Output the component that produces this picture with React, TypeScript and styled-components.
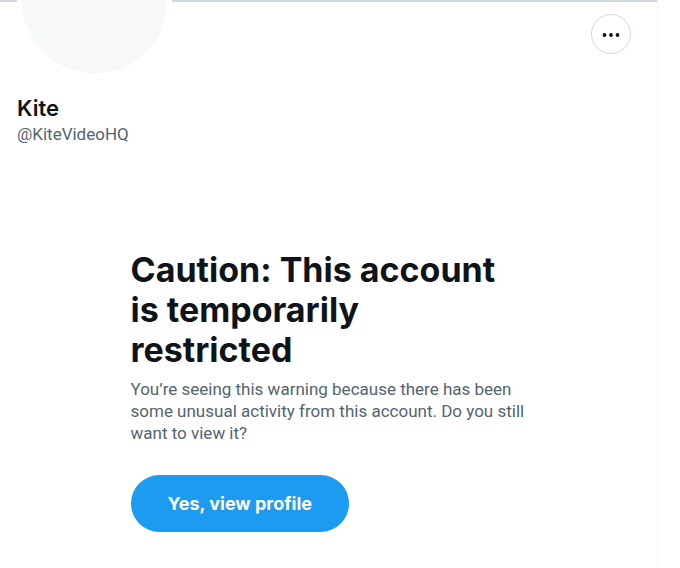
import React from "react";
import styled, { createGlobalStyle } from "styled-components";

const Global = createGlobalStyle`
  *, *::before, *::after { box-sizing: border-box; }
  body { margin: 0; background: #fff; color: #0f1419; font-family: Roboto, "Liberation Sans", sans-serif; }
`;

const Column = styled.main`
  min-height: 100vh;
  margin-right: 22px;
  border-right: 1px solid #eff3f4;
`;

const Banner = styled.div`
  height: 2px;
  background: #cfd9de;
`;

const ProfileTop = styled.div`
  display: flex;
  justify-content: space-between;
  align-items: flex-start;
  padding: 0 26px 0 17px;
`;

const Avatar = styled.div`
  width: 155px;
  height: 155px;
  margin-top: -79px;
  border: 5px solid #fff;
  border-radius: 50%;
  background: #f7f9f9;
`;

const MoreButton = styled.button`
  display: flex;
  align-items: center;
  justify-content: center;
  width: 40px;
  height: 40px;
  margin-top: 12px;
  padding: 0;
  border: 1px solid #cfd9de;
  border-radius: 50%;
  background: #fff;
  color: #0f1419;
`;

const Names = styled.header`
  padding: 16px 17px 0;
`;

const DisplayName = styled.h2`
  margin: 0;
  font-family: Inter, Roboto, sans-serif;
  font-size: 22px;
  line-height: 28px;
  font-weight: 600;
`;

const Handle = styled.p`
  margin: 0;
  color: #536471;
  font-size: 17px;
  line-height: 24px;
`;

const Warning = styled.section`
  width: 396px;
  max-width: 100%;
  margin: 104px auto 0;
`;

const Title = styled.h1`
  margin: 0 0 8px;
  font-family: Inter, Roboto, sans-serif;
  font-size: 34px;
  line-height: 40px;
  font-weight: 700;
`;

const Message = styled.p`
  margin: 0 0 31px;
  color: #536471;
  font-size: 17px;
  line-height: 22px;
`;

const ViewButton = styled.button`
  height: 57px;
  padding: 0 37px;
  border: 0;
  border-radius: 29px;
  background: #1d9bf0;
  color: #fff;
  font-family: Inter, Roboto, sans-serif;
  font-size: 18px;
  line-height: 24px;
  font-weight: 700;
`;

export default function App() {
  return (
    <>
      <Global />
      <Column>
        <Banner />
        <ProfileTop>
          <Avatar />
          <MoreButton type="button" aria-label="More">
            <svg width="22" height="22" viewBox="0 0 22 22" fill="currentColor" aria-hidden="true">
              <circle cx="4.500" cy="12" r="1.900" />
              <circle cx="11" cy="12" r="1.900" />
              <circle cx="17.500" cy="12" r="1.900" />
            </svg>
          </MoreButton>
        </ProfileTop>
        <Names>
          <DisplayName>Kite</DisplayName>
          <Handle>@KiteVideoHQ</Handle>
        </Names>
        <Warning>
          <Title>Caution: This account is temporarily restricted</Title>
          <Message>
            You’re seeing this warning because there has been some unusual activity from this account. Do you still
            want to view it?
          </Message>
          <ViewButton type="button">Yes, view profile</ViewButton>
        </Warning>
      </Column>
    </>
  );
}
